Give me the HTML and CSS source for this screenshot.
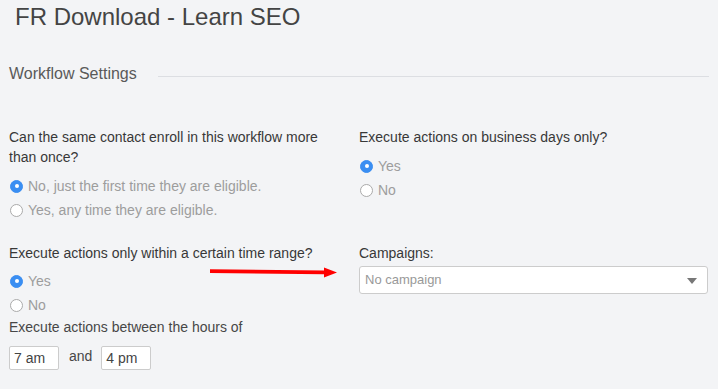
FILE: index.html
```html
<!DOCTYPE html>
<html lang="en">
<head>
<meta charset="utf-8">
<title>FR Download - Learn SEO</title>
<link rel="stylesheet" href="styles.css">
</head>
<body>
<div class="page">
  <h1 class="title">FR Download - Learn SEO</h1>
  <div class="section-head">
    <span class="section-title">Workflow Settings</span>
    <span class="section-rule"></span>
  </div>
  <div class="grid">
    <div class="field">
      <div class="question">Can the same contact enroll in this workflow more than once?</div>
      <div class="options">
        <div class="option"><span class="radio checked"></span><span class="opt-label">No, just the first time they are eligible.</span></div>
        <div class="option"><span class="radio"></span><span class="opt-label">Yes, any time they are eligible.</span></div>
      </div>
    </div>
    <div class="field">
      <div class="question">Execute actions on business days only?</div>
      <div class="options">
        <div class="option"><span class="radio checked"></span><span class="opt-label">Yes</span></div>
        <div class="option"><span class="radio"></span><span class="opt-label">No</span></div>
      </div>
    </div>
    <div class="field">
      <div class="question">Execute actions only within a certain time range?</div>
      <div class="options tight">
        <div class="option"><span class="radio checked"></span><span class="opt-label">Yes</span></div>
        <div class="option"><span class="radio"></span><span class="opt-label">No</span></div>
      </div>
      <div class="hours-label">Execute actions between the hours of</div>
      <div class="hours">
        <span class="time-box">7 am</span>
        <span class="and">and</span>
        <span class="time-box">4 pm</span>
      </div>
    </div>
    <div class="field">
      <div class="question">Campaigns:</div>
      <div class="select">
        <span class="placeholder">No campaign</span>
        <span class="caret"></span>
      </div>
    </div>
  </div>
  <svg class="annot-arrow" width="130" height="12" viewBox="0 0 130 12" aria-hidden="true">
    <polygon points="0,2.2 114,3.6 114,0.5 127,5.5 114,10.5 114,7.2 0,6" fill="#ff0000"/>
  </svg>
</div>
</body>
</html>
```
FILE: styles.css
```css
* { box-sizing: border-box; }
html, body { margin: 0; padding: 0; }
body {
  background: #f3f4f6;
  font-family: "Liberation Sans", Arial, Helvetica, sans-serif;
  color: #333;
  width: 718px;
  height: 389px;
  overflow: hidden;
}
.page {
  position: relative;
  padding: 3px 10px 0 9px;
}
.title {
  margin: 0;
  padding-left: 6px;
  font-size: 24px;
  line-height: 28px;
  font-weight: normal;
  color: #444;
}
.section-head {
  display: flex;
  align-items: center;
  margin-top: 33px;
  height: 20px;
}
.section-title {
  font-size: 16px;
  line-height: 20px;
  color: #5a5a5a;
}
.section-rule {
  flex: 1;
  height: 1px;
  background: #dcdee2;
  margin-left: 21px;
  margin-top: 4px;
  margin-right: -1px;
}
.grid {
  display: grid;
  grid-template-columns: 335px 1fr;
  column-gap: 15px;
  row-gap: 21px;
  margin-top: 43px;
}
.question {
  font-size: 14px;
  line-height: 20px;
  color: #383838;
}
.options {
  margin-top: 7px;
}
.options.tight {
  margin-top: 6px;
}
.option {
  display: flex;
  align-items: center;
  height: 24px;
}
.radio {
  width: 13px;
  height: 13px;
  border-radius: 50%;
  border: 1px solid #aaa;
  background: #fff;
  margin-left: 1px;
  margin-right: 5px;
  flex: none;
  position: relative;
}
.radio.checked {
  background: #3a8ef2;
  border-color: #3a8ef2;
}
.radio.checked::after {
  content: "";
  position: absolute;
  left: 50%;
  top: 50%;
  width: 4px;
  height: 4px;
  margin: -2px 0 0 -2px;
  border-radius: 50%;
  background: #fff;
}
.opt-label {
  font-size: 14px;
  color: #9d9d9d;
}
.hours-label {
  font-size: 14px;
  line-height: 20px;
  color: #474747;
}
.hours {
  display: flex;
  align-items: center;
  margin-top: 9px;
}
.time-box {
  width: 50px;
  height: 24px;
  background: #fff;
  border: 1px solid #ccc;
  border-radius: 2px;
  font-size: 14px;
  line-height: 22px;
  padding-left: 4px;
  color: #444;
}
.and {
  font-size: 14px;
  color: #474747;
  margin: -4px 9px 0 10px;
}
.select {
  margin-top: 3px;
  height: 28px;
  background: #fff;
  border: 1px solid #ccc;
  border-radius: 3px;
  display: flex;
  align-items: center;
  justify-content: space-between;
  padding: 0 10px 0 5px;
}
.placeholder {
  font-size: 13px;
  color: #999;
  margin-top: -1px;
}
.caret {
  width: 0;
  height: 0;
  border-left: 5px solid transparent;
  border-right: 5px solid transparent;
  border-top: 6px solid #777;
  margin-top: 1px;
}
.annot-arrow {
  position: absolute;
  left: 210px;
  top: 267px;
}
```
